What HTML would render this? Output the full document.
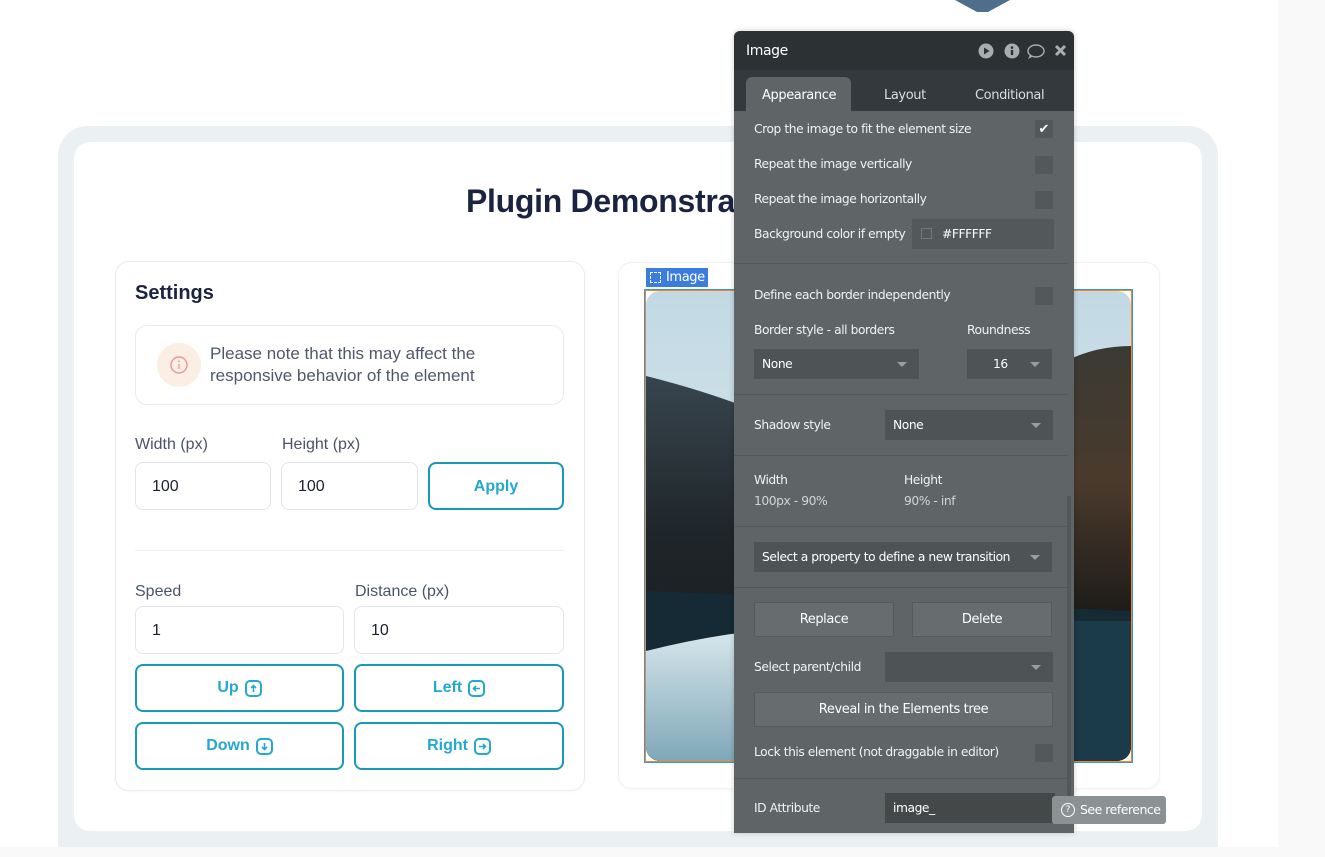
<!DOCTYPE html>
<html><head><meta charset="utf-8"><style>
*{box-sizing:border-box;margin:0;padding:0}
body{width:1325px;height:857px;background:#f9f9f9;position:relative;overflow:hidden;font-family:"Liberation Sans",sans-serif}
.a{position:absolute}
.page{left:0;top:0;width:1278px;height:847px;background:#fff}
.frame{left:58px;top:126px;width:1160px;height:721px;background:#ebf0f3;border-radius:30px 30px 0 0}
.inner{left:74px;top:142px;width:1128px;height:689px;background:#fff;border-radius:16px}
.card{background:#fff;border:1.5px solid #e9ebef;border-radius:14px;box-shadow:0 1px 3px rgba(0,0,0,.04)}
.lbl{font-size:16px;color:#4a5468}
.inp{border:1px solid #e3e5ea;border-radius:8px;background:#fff;font-size:16px;color:#1a2030;padding-left:16px;display:flex;align-items:center}
.btn{border:2px solid #1899b5;border-radius:8px;color:#22a9cc;font-weight:bold;font-size:16px;display:flex;align-items:center;justify-content:center;gap:6px}
.ic{width:17px;height:17px;border:2px solid #22a9cc;border-radius:5px;display:inline-flex;align-items:center;justify-content:center}
.pn{font-family:"DejaVu Sans",sans-serif;color:#fff;font-size:12px}
.pt{font-size:12.3px;color:#f2f2f2;font-family:"DejaVu Sans",sans-serif;letter-spacing:-.45px}
.sel{background:#4e5356;color:#fff;font-size:12.3px;font-family:"DejaVu Sans",sans-serif;letter-spacing:-.45px;display:flex;align-items:center;padding-left:8px}
.dd:after{content:"";position:absolute;right:12px;top:50%;margin-top:-2px;border:5px solid transparent;border-top:5px solid #9a9ea1;border-bottom:0}
.cb{width:18px;height:18px;background:#53585b}
.hr{left:734px;width:334px;height:1px;background:#53585b}
.pb{background:#676c6f;border:1px solid #555a5d;color:#fff;font-size:13px;font-family:"DejaVu Sans",sans-serif;display:flex;align-items:center;justify-content:center;letter-spacing:-.4px}
</style></head><body>
<div class="a page"></div>
<div class="a" style="left:955px;top:0;width:55px;height:12px;background:#4d6f8c;clip-path:polygon(0 0,100% 0,60% 100%,40% 100%)"></div>
<div class="a frame"></div>
<div class="a inner"></div>
<div class="a" style="left:466px;top:183px;white-space:nowrap;font-size:32px;font-weight:bold;color:#1a2340;letter-spacing:-.3px">Plugin Demonstration</div>

<div class="a card" style="left:115px;top:261px;width:470px;height:530px"></div>
<div class="a" style="left:135px;top:282px;font-size:20px;font-weight:bold;color:#1a2340">Settings</div>
<div class="a" style="left:135px;top:325px;width:429px;height:80px;border:1.5px solid #e8ecf1;border-radius:12px"></div>
<div class="a" style="left:157px;top:343px;width:44px;height:44px;border-radius:50%;background:#fbeee3"></div>
<svg class="a" style="left:168px;top:354px" width="22" height="22" viewBox="0 0 22 22"><circle cx="11" cy="11" r="8" fill="none" stroke="#e59a9a" stroke-width="1.4"/><line x1="11" y1="10" x2="11" y2="15" stroke="#e59a9a" stroke-width="1.4"/><circle cx="11" cy="7.3" r=".9" fill="#e59a9a"/></svg>
<div class="a" style="left:210px;top:343px;font-size:17px;line-height:22px;color:#4f586b">Please note that this may affect the<br>responsive behavior of the element</div>
<div class="a lbl" style="left:135px;top:436px">Width (px)</div>
<div class="a lbl" style="left:282px;top:436px">Height (px)</div>
<div class="a inp" style="left:135px;top:462px;width:136px;height:48px;padding-top:2px">100</div>
<div class="a inp" style="left:281px;top:462px;width:137px;height:48px;padding-top:2px">100</div>
<div class="a btn" style="left:428px;top:462px;width:136px;height:48px;padding-top:2px">Apply</div>
<div class="a" style="left:135px;top:550px;width:429px;height:1px;background:#eef0f3"></div>
<div class="a lbl" style="left:135px;top:583px">Speed</div>
<div class="a lbl" style="left:355px;top:583px">Distance (px)</div>
<div class="a inp" style="left:135px;top:606px;width:209px;height:48px;padding-top:2px">1</div>
<div class="a inp" style="left:354px;top:606px;width:210px;height:48px;padding-top:2px">10</div>
<div class="a btn" style="left:135px;top:664px;width:209px;height:48px">Up <span class="ic"><svg width="9" height="9" viewBox="0 0 9 9"><path d="M4.5 8V1.5M2 4l2.5-2.5L7 4" fill="none" stroke="#22a9cc" stroke-width="1.6"/></svg></span></div>
<div class="a btn" style="left:354px;top:664px;width:210px;height:48px">Left <span class="ic"><svg width="9" height="9" viewBox="0 0 9 9"><path d="M8 4.5H1.5M4 2L1.5 4.5 4 7" fill="none" stroke="#22a9cc" stroke-width="1.6"/></svg></span></div>
<div class="a btn" style="left:135px;top:722px;width:209px;height:48px">Down <span class="ic"><svg width="9" height="9" viewBox="0 0 9 9"><path d="M4.5 1v6.5M2 5l2.5 2.5L7 5" fill="none" stroke="#22a9cc" stroke-width="1.6"/></svg></span></div>
<div class="a btn" style="left:354px;top:722px;width:210px;height:48px">Right <span class="ic"><svg width="9" height="9" viewBox="0 0 9 9"><path d="M1 4.5h6.5M5 2l2.5 2.5L5 7" fill="none" stroke="#22a9cc" stroke-width="1.6"/></svg></span></div>

<div class="a card" style="left:618px;top:262px;width:542px;height:527px;border-color:#f1f2f4"></div>
<div class="a" style="left:646px;top:268px;width:62px;height:19px;background:#3b7ddd;color:#fff;font-size:13px;font-family:'DejaVu Sans',sans-serif;padding-left:20px;line-height:19px;letter-spacing:-.4px">Image</div>
<div class="a" style="left:650px;top:272px;width:11px;height:11px;border:1px dashed #fff"></div>
<div class="a" style="left:645px;top:290px;width:487px;height:472px;border:1.5px solid #f08a1c;outline:1px solid #3a8ee6;overflow:hidden;background:#fff">
<svg width="485" height="470" viewBox="0 0 485 470" style="display:block">
<defs><linearGradient id="s" x1="0" y1="0" x2="0" y2="1"><stop offset="0" stop-color="#c2d9e4"/><stop offset="1" stop-color="#e6eef1"/></linearGradient>
<linearGradient id="w" x1="0" y1="0" x2="0" y2="1"><stop offset="0" stop-color="#d8e6ec"/><stop offset="1" stop-color="#7fa8b8"/></linearGradient>
<linearGradient id="m" x1="0" y1="0" x2="0" y2="1"><stop offset="0" stop-color="#3d4b55"/><stop offset=".45" stop-color="#1f262a"/><stop offset="1" stop-color="#121619"/></linearGradient>
<linearGradient id="r" x1="0" y1="0" x2="0" y2="1"><stop offset="0" stop-color="#3a3a34"/><stop offset=".5" stop-color="#4a3a2c"/><stop offset="1" stop-color="#1a1a18"/></linearGradient>
<clipPath id="c"><rect width="485" height="470" rx="14"/></clipPath></defs>
<g clip-path="url(#c)">
<rect width="485" height="470" fill="url(#s)"/>
<path d="M0 85 Q60 100 110 120 L400 90 Q440 60 485 55 L485 470 L0 470Z" fill="url(#m)"/>
<path d="M420 70 Q450 55 485 55 L485 330 L420 330Z" fill="url(#r)"/>
<path d="M0 300 L485 320 L485 470 L0 470Z" fill="#152a35"/>
<path d="M0 360 Q60 345 110 340 L110 470 L0 470Z" fill="url(#w)"/>
<path d="M420 330 L485 330 L485 470 L420 470Z" fill="#1b3a4a"/>
</g>
</svg></div>

<!-- panel -->
<div class="a" style="left:734px;top:31px;width:340px;height:802px;background:#5f6467;border-radius:6px 6px 0 0;overflow:hidden;box-shadow:0 0 6px rgba(0,0,0,.2)">
<div class="a" style="left:0;top:0;width:340px;height:39px;background:#2c3133"></div>
<div class="a pn" style="left:12px;top:12px;font-size:14px;letter-spacing:-.4px">Image</div>
<svg class="a" style="left:244px;top:12px" width="90" height="17" viewBox="0 0 90 17"><circle cx="8" cy="8" r="7.5" fill="#a9adb0"/><path d="M6 4.5v7l5.5-3.5z" fill="#2c3133"/><circle cx="34" cy="8" r="7.5" fill="#a9adb0"/><rect x="32.8" y="7" width="2.4" height="5" fill="#2c3133"/><circle cx="34" cy="4.6" r="1.3" fill="#2c3133"/><ellipse cx="58" cy="8" rx="8" ry="6" fill="none" stroke="#a9adb0" stroke-width="1.4"/><path d="M52 12l-2 4 5-2.5" fill="#a9adb0"/><path d="M78 3l9 9M87 3l-9 9" stroke="#a9adb0" stroke-width="3"/></svg>
<div class="a" style="left:0;top:39px;width:340px;height:41px;background:#33393c"></div>
<div class="a" style="left:12px;top:46px;width:105px;height:34px;background:#5f6467;border-radius:6px 6px 0 0"></div>
<div class="a pn" style="left:28px;top:57px;font-size:13px;letter-spacing:-.4px">Appearance</div>
<div class="a pn" style="left:150px;top:57px;font-size:13px;color:#ddd;letter-spacing:-.4px">Layout</div>
<div class="a pn" style="left:241px;top:57px;font-size:13px;color:#ddd;letter-spacing:-.4px">Conditional</div>
<div class="a" style="left:333px;top:465px;width:4px;height:300px;background:#525759"></div>
</div>
<div class="a pt" style="left:754px;top:122px">Crop the image to fit the element size</div>
<div class="a cb" style="left:1035px;top:120px;color:#fff;font-size:13px;text-align:center;line-height:18px">✔</div>
<div class="a pt" style="left:754px;top:157px">Repeat the image vertically</div><div class="a cb" style="left:1035px;top:156px"></div>
<div class="a pt" style="left:754px;top:192px">Repeat the image horizontally</div><div class="a cb" style="left:1035px;top:191px"></div>
<div class="a pt" style="left:754px;top:227px">Background color if empty</div>
<div class="a sel" style="left:912px;top:219px;width:142px;height:30px;background:#53585b;padding-left:30px">#FFFFFF</div>
<div class="a" style="left:921px;top:228px;width:11px;height:11px;border:1px solid #777"></div>
<div class="a hr" style="top:263px"></div>
<div class="a pt" style="left:754px;top:288px">Define each border independently</div><div class="a cb" style="left:1035px;top:287px"></div>
<div class="a pt" style="left:754px;top:323px">Border style - all borders</div>
<div class="a pt" style="left:967px;top:323px">Roundness</div>
<div class="a sel dd" style="left:754px;top:349px;width:165px;height:30px">None</div>
<div class="a sel dd" style="left:967px;top:349px;width:85px;height:30px;padding-left:26px">16</div>
<div class="a hr" style="top:394px"></div>
<div class="a pt" style="left:754px;top:418px">Shadow style</div>
<div class="a sel dd" style="left:885px;top:410px;width:168px;height:30px">None</div>
<div class="a hr" style="top:455px"></div>
<div class="a pt" style="left:754px;top:473px">Width</div><div class="a pt" style="left:904px;top:473px">Height</div>
<div class="a pt" style="left:754px;top:494px;color:#d2d4d6">100px - 90%</div><div class="a pt" style="left:904px;top:494px;color:#d2d4d6">90% - inf</div>
<div class="a hr" style="top:526px"></div>
<div class="a sel dd" style="left:754px;top:542px;width:298px;height:30px">Select a property to define a new transition</div>
<div class="a hr" style="top:587px"></div>
<div class="a pb" style="left:754px;top:602px;width:140px;height:35px">Replace</div>
<div class="a pb" style="left:912px;top:602px;width:140px;height:35px">Delete</div>
<div class="a pt" style="left:754px;top:660px">Select parent/child</div>
<div class="a sel dd" style="left:885px;top:652px;width:168px;height:30px"></div>
<div class="a pb" style="left:754px;top:692px;width:299px;height:35px">Reveal in the Elements tree</div>
<div class="a pt" style="left:754px;top:745px">Lock this element (not draggable in editor)</div><div class="a cb" style="left:1035px;top:744px"></div>
<div class="a hr" style="top:778px"></div>
<div class="a pt" style="left:754px;top:801px">ID Attribute</div>
<div class="a sel" style="left:885px;top:793px;width:170px;height:30px;background:#444849">image_</div>
<div class="a" style="left:1052px;top:796px;width:114px;height:28px;background:#8c9193;border-radius:3px;color:#fff;font-size:12.5px;font-family:'DejaVu Sans',sans-serif;letter-spacing:-.5px;line-height:28px;padding-left:28px">See reference</div>
<div class="a" style="left:1061px;top:803px;width:14px;height:14px;border:1.3px solid #fff;border-radius:50%;font-size:9px;color:#fff;text-align:center;line-height:12px;font-family:'DejaVu Sans',sans-serif">?</div>
</body></html>
